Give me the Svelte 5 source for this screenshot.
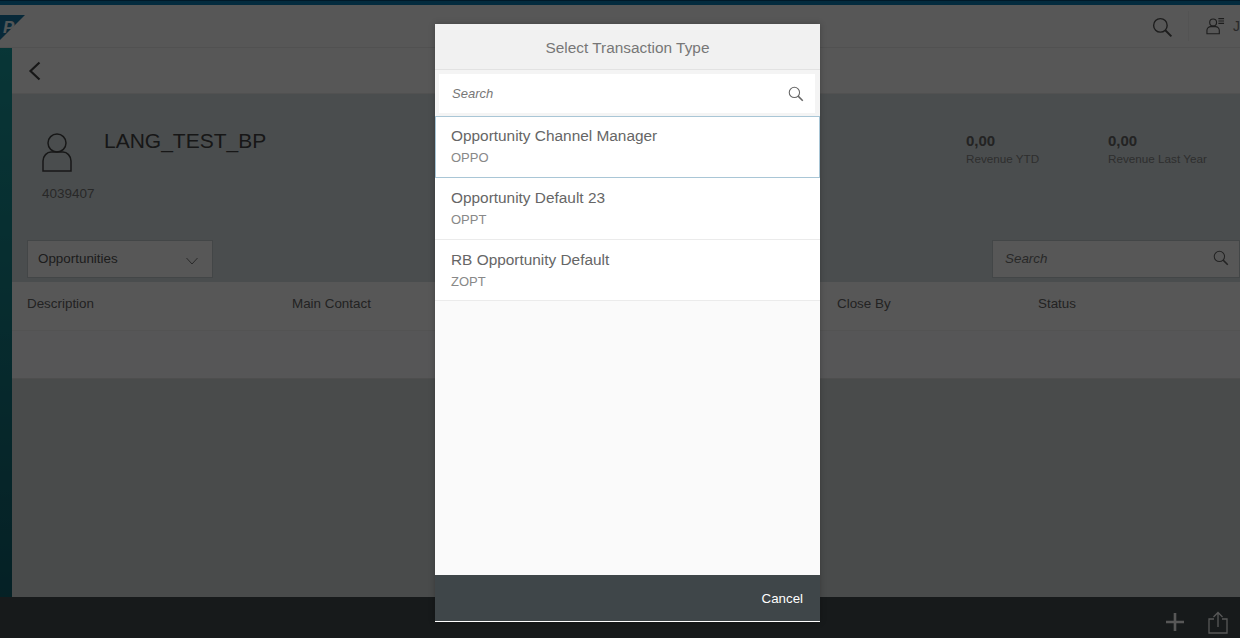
<script lang="ts">
  const columns = [
    { label: 'Description', width: 265 },
    { label: 'Main Contact', width: 545 },
    { label: 'Close By', width: 201 },
    { label: 'Status', width: 150 }
  ];

  const types = [
    { name: 'Opportunity Channel Manager', code: 'OPPO' },
    { name: 'Opportunity Default 23', code: 'OPPT' },
    { name: 'RB Opportunity Default', code: 'ZOPT' }
  ];

  const stats = [
    { value: '0,00', label: 'Revenue YTD' },
    { value: '0,00', label: 'Revenue Last Year' }
  ];

  let selected = $state(0);
</script>

{#snippet searchIcon(size)}
  <svg width={size} height={size} viewBox="0 0 18 18" fill="none" stroke="currentColor" stroke-width="1.2"><circle cx="7.2" cy="7.2" r="5.8"/><path d="M11.4 11.4 16.6 16.6" stroke-width="1.7"/></svg>
{/snippet}

<div class="page">
  <div class="stripe"></div>

  <header class="shell">
    <svg class="logo" width="25" height="26" viewBox="0 0 25 26">
      <polygon points="0,0 25,0 0,25" fill="#1a78a8"/>
      <text x="3" y="18" class="logo-text">P</text>
    </svg>
    <div class="shell-right">
      <button class="shell-btn search-btn" aria-label="Search">{@render searchIcon(21)}</button>
      <div class="user">
        <svg width="20" height="18" viewBox="0 0 20 18" fill="none" stroke="currentColor" stroke-width="1.2"><circle cx="7.5" cy="5.2" r="3.6"/><path d="M1 17.2v-3.6c0-2.2 2-4 4-4h5c2 0 4 1.800 4 4v3.600z"/><path d="M13 1.200h6M13 3.700h6M13 6.200h6"/></svg>
        <span>J</span>
      </div>
    </div>
  </header>

  <div class="body">
    <div class="rail"></div>
    <main class="content">
      <div class="nav">
        <svg width="14" height="20" viewBox="0 0 14 20" fill="none" stroke="currentColor" stroke-width="2.200"><path d="M11.500 1.500 2.500 10l9 8.500"/></svg>
      </div>

      <section class="summary">
        <div class="summary-top">
          <div class="profile">
            <div class="who">
              <svg width="30" height="39" viewBox="0 0 30 39" fill="none" stroke="currentColor" stroke-width="1.500"><circle cx="15" cy="10" r="9"/><path d="M1 38V28c0-5 4-9 8-9h12c4 0 8 4 8 9v10z"/></svg>
              <h1>LANG_TEST_BP</h1>
            </div>
            <div class="bp-id">4039407</div>
          </div>
          <div class="stats">
            {#each stats as stat}
              <div class="stat">
                <strong>{stat.value}</strong>
                <span>{stat.label}</span>
              </div>
            {/each}
          </div>
        </div>

        <div class="controls">
          <div class="select">
            <span>Opportunities</span>
            <svg width="14" height="8" viewBox="0 0 14 8" fill="none" stroke="currentColor" stroke-width="1"><path d="M1.500 1l5.500 6 5.500-6"/></svg>
          </div>
          <div class="list-search">
            <span>Search</span>
            {@render searchIcon(16)}
          </div>
        </div>
      </section>

      <div class="table-head">
        {#each columns as col}
          <div style="width: {col.width}px">{col.label}</div>
        {/each}
      </div>
      <div class="table-row"></div>
    </main>
  </div>

  <footer class="bottom">
    <svg class="plus" width="20" height="20" viewBox="0 0 20 20" fill="none" stroke="currentColor" stroke-width="2.600"><path d="M10 1v18M1 10h18"/></svg>
    <svg width="20" height="23" viewBox="0 0 20 23" fill="none" stroke="currentColor" stroke-width="1.300"><path d="M6 8H1v14h18V8h-5M10 16V1.500M5.500 6 10 1.500 14.500 6"/></svg>
  </footer>

  <div class="blocker"></div>

  <div class="dialog" role="dialog">
    <div class="dialog-title">Select Transaction Type</div>
    <div class="dialog-search">
      <div class="dialog-search-box">
        <span>Search</span>
        {@render searchIcon(16)}
      </div>
    </div>
    <ul class="types">
      {#each types as type, i}
        <li class:selected={selected === i}>
          <button onclick={() => (selected = i)}>
            <span class="type-name">{type.name}</span>
            <span class="type-code">{type.code}</span>
          </button>
        </li>
      {/each}
    </ul>
    <div class="dialog-footer">Cancel</div>
  </div>
</div>

<style>
  :global(body) {
    margin: 0;
    font-family: "Liberation Sans", Arial, sans-serif;
  }

  .page {
    position: relative;
    width: 1240px;
    height: 638px;
    overflow: hidden;
    display: flex;
    flex-direction: column;
    color: #666;
    background: #fff;
  }

  .stripe {
    height: 5px;
    flex: none;
    background: linear-gradient(#014a75 0 1px, #0a7fb5 1px);
  }

  .shell {
    height: 43px;
    flex: none;
    display: flex;
    justify-content: space-between;
    background: #fff;
    border-bottom: 1px solid #eee;
    box-sizing: border-box;
  }

  .logo {
    margin-top: 10px;
  }

  .logo-text {
    font: italic bold 17px "Liberation Sans", sans-serif;
    fill: #f4fbff;
  }

  .shell-right {
    display: flex;
    align-items: flex-start;
  }

  .shell-btn {
    padding: 0;
    border: 0;
    background: none;
    color: #555;
  }

  .search-btn {
    margin: 12px 15px 0 0;
  }

  .user {
    display: flex;
    align-items: flex-start;
    gap: 8px;
    width: 52px;
    height: 30px;
    margin-top: 6px;
    padding: 6px 0 0 17px;
    box-sizing: border-box;
    border-left: 1px solid #f4f4f4;
    color: #555;
    font-size: 14px;
    overflow: hidden;
  }

  .user span {
    margin-top: 1px;
    color: #777;
  }

  .body {
    flex: 1;
    display: flex;
    min-height: 0;
  }

  .rail {
    width: 12px;
    flex: none;
    background: linear-gradient(#1a9ea0, #10606e);
  }

  .content {
    flex: 1;
    display: flex;
    flex-direction: column;
    min-width: 0;
    background: #d6dbdd;
  }

  .nav {
    height: 46px;
    flex: none;
    box-sizing: border-box;
    padding: 13px 0 0 16px;
    background: #fff;
    border-bottom: 1px solid #ececec;
    color: #444;
  }

  .summary {
    height: 188px;
    flex: none;
    box-sizing: border-box;
    padding: 39px 0 0 15px;
    background: #d8e2e4;
  }

  .summary-top {
    display: flex;
    justify-content: space-between;
    height: 107px;
  }

  .who {
    display: flex;
    align-items: flex-start;
    gap: 32px;
    color: #444;
    padding-left: 15px;
  }

  .who h1 {
    margin: -5px 0 0;
    font-size: 21px;
    font-weight: 400;
    line-height: 26px;
    color: #444;
  }

  .bp-id {
    margin: 14px 0 0 15px;
    font-size: 13.500px;
    line-height: 16px;
    color: #777;
  }

  .stats {
    display: flex;
  }

  .stat {
    display: flex;
    flex-direction: column;
    width: 142px;
    font-size: 11.700px;
    color: #888;
  }

  .stat:last-child {
    width: 132px;
  }

  .stat strong {
    font-size: 15px;
    line-height: 16px;
    color: #666;
  }

  .stat span {
    margin-top: 3px;
    line-height: 14px;
  }

  .controls {
    display: flex;
    justify-content: space-between;
  }

  .select,
  .list-search {
    height: 38px;
    box-sizing: border-box;
    display: flex;
    justify-content: space-between;
    align-items: center;
    padding-bottom: 2px;
    background: #fff;
    border: 1px solid #c4ced0;
    font-size: 13.400px;
    color: #555;
  }

  .select {
    width: 186px;
    padding-left: 10px;
    padding-right: 13px;
  }

  .select svg {
    margin-top: 6px;
    color: #777;
  }

  .list-search {
    width: 248px;
    padding-left: 12px;
    padding-right: 10px;
    font-style: italic;
    color: #777;
  }

  .list-search svg {
    color: #666;
  }

  .table-head {
    height: 49px;
    flex: none;
    box-sizing: border-box;
    display: flex;
    align-items: center;
    padding: 0 0 5px 15px;
    background: #fff;
    border-bottom: 1px solid #f2f2f2;
    font-size: 13.400px;
    color: #666;
  }

  .table-row {
    height: 48px;
    flex: none;
    background: #fcfdff;
    border-bottom: 1px solid #e4e4e4;
    box-sizing: border-box;
  }

  .bottom {
    height: 41px;
    flex: none;
    box-sizing: border-box;
    display: flex;
    justify-content: flex-end;
    align-items: flex-start;
    gap: 23px;
    padding: 14px 12px 0 0;
    background: #444e50;
    color: #fff;
  }

  .plus {
    margin-top: 1px;
  }

  .blocker {
    position: absolute;
    inset: 0;
    background: rgba(0, 0, 0, 0.66);
  }

  .dialog {
    position: absolute;
    left: 435px;
    top: 24px;
    width: 385px;
    height: 598px;
    box-sizing: border-box;
    display: flex;
    flex-direction: column;
    background: #fafafa;
    border-bottom: 1px solid #fff;
    box-shadow: 0 0 6px rgba(0, 0, 0, 0.25);
  }

  .dialog-title {
    height: 46px;
    flex: none;
    display: flex;
    align-items: center;
    justify-content: center;
    box-sizing: border-box;
    padding-top: 2px;
    background: #f1f1f1;
    border-bottom: 1px solid #e2e2e2;
    font-size: 15.400px;
    color: #777;
  }

  .dialog-search {
    height: 46px;
    flex: none;
    box-sizing: border-box;
    padding: 4px 5px 3px 4px;
    background: #f4f4f4;
  }

  .dialog-search-box {
    height: 39px;
    box-sizing: border-box;
    display: flex;
    justify-content: space-between;
    align-items: center;
    padding: 0 11px 0 13px;
    background: #fff;
    font-size: 13px;
    font-style: italic;
    color: #777;
  }

  .dialog-search-box svg {
    color: #666;
  }

  .types {
    flex: 1;
    margin: 0;
    padding: 0;
    list-style: none;
  }

  .types li {
    height: 61.500px;
    box-sizing: border-box;
    background: #fff;
    border-bottom: 1px solid #ebebeb;
  }

  .types li.selected {
    height: 62px;
    border: 1px solid #a9c6d6;
  }

  .types button {
    display: flex;
    flex-direction: column;
    gap: 6px;
    width: 100%;
    height: 100%;
    box-sizing: border-box;
    padding: 11px 15px 0 16px;
    border: 0;
    background: none;
    text-align: left;
    font-family: inherit;
    cursor: pointer;
  }

  .types li.selected button {
    padding: 10px 14px 0 15px;
  }

  .type-name {
    font-size: 15.400px;
    line-height: 17px;
    color: #666;
  }

  .type-code {
    font-size: 13px;
    line-height: 15px;
    color: #888;
  }

  .dialog-footer {
    height: 46px;
    flex: none;
    box-sizing: border-box;
    display: flex;
    align-items: center;
    justify-content: flex-end;
    padding: 0 17px 0 0;
    background: #3f4649;
    font-size: 13.300px;
    color: #fff;
  }
</style>
